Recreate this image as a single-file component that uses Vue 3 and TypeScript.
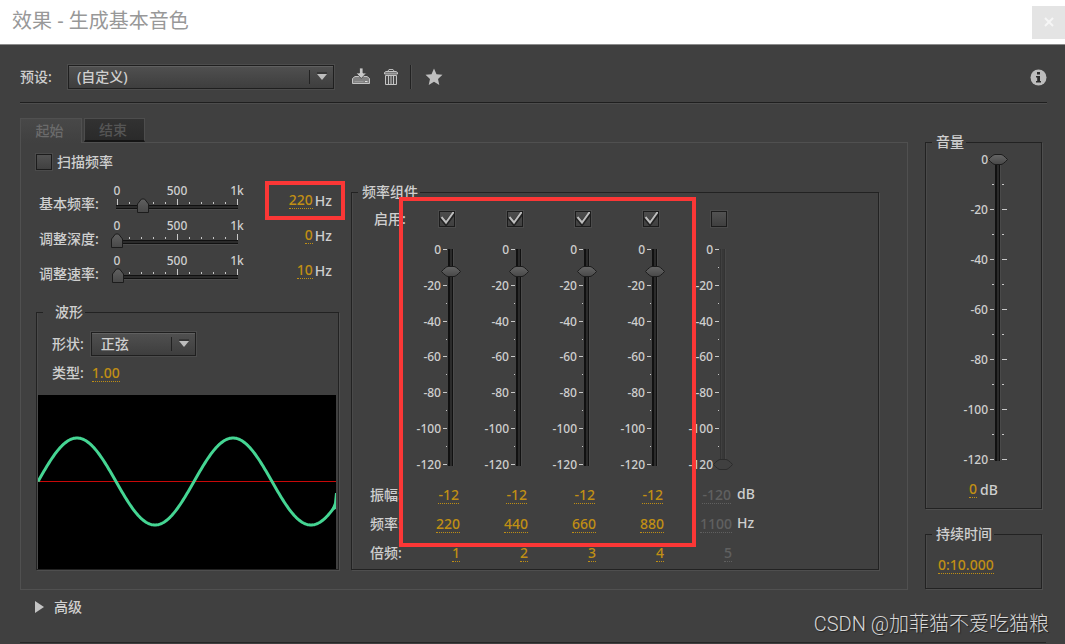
<script setup lang="ts">
import { ref } from 'vue'

interface Sweep { id: string; label: string; value: number; marked: boolean }
interface Partial { on: boolean; amp: number; freq: number; multiple: number }

const sweeps = ref<Sweep[]>([
  { id: 'base', label: '基本频率:', value: 220, marked: true },
  { id: 'depth', label: '调整深度:', value: 0, marked: false },
  { id: 'rate', label: '调整速率:', value: 10, marked: false },
])

const partials = ref<Partial[]>([
  { on: true, amp: -12, freq: 220, multiple: 1 },
  { on: true, amp: -12, freq: 440, multiple: 2 },
  { on: true, amp: -12, freq: 660, multiple: 3 },
  { on: true, amp: -12, freq: 880, multiple: 4 },
  { on: false, amp: -120, freq: 1100, multiple: 5 },
])

const volume = ref(0)
const sweepOn = ref(false)
const levels = [0, -20, -40, -60, -80, -100, -120]
const steps = Array.from({ length: 11 }, (_, i) => i)
const halves = Array.from({ length: 13 }, (_, i) => i)

const wave = (() => {
  const points: string[] = []
  for (let x = 0; x <= 297; x += 1) {
    const y = 86.5 - 43.5 * Math.sin((x / 156) * Math.PI * 2)
    points.push(`${x},${y.toFixed(2)}`)
  }
  return points.join(' ')
})()
</script>

<template>
  <div class="dialog">
    <header class="titlebar">
      <h1>效果 - 生成基本音色</h1>
      <button type="button" class="close" aria-label="关闭">
        <svg width="10" height="10" viewBox="0 0 10 10"><path d="M1 1l8 8M9 1l-8 8" stroke="#f6f6f6" stroke-width="2" /></svg>
      </button>
    </header>

    <div class="toolbar">
      <label class="preset-label" for="preset">预设:</label>
      <span class="drop preset">
        <select id="preset"><option>(自定义)</option></select>
        <svg class="arrow" width="20" height="16" viewBox="0 0 20 16"><path d="M.5 1v14" stroke="#222" /><path d="M8 4h10" stroke="#222" /><path d="M8 5h10l-5 6z" fill="#bdbdbd" /></svg>
      </span>
      <button type="button" class="tool save" aria-label="保存预设">
        <svg width="20" height="18" viewBox="0 0 20 18">
          <path d="M4 8.500h12l2.500 2v5h-17v-5z" fill="#808080" stroke="#c4c4c4" stroke-linejoin="round" />
          <path d="M3.500 13.500h9" stroke="#999" /><path d="M14 13.500h2.500" stroke="#ddd" />
          <path d="M8.500 0h3.500v5H15.500l-5.200 5.500L5 5h3.500z" fill="#c8c8c8" stroke="#404040" stroke-width=".8" />
        </svg>
      </button>
      <button type="button" class="tool trash" aria-label="删除预设">
        <svg width="16" height="18" viewBox="0 0 16 18">
          <path d="M5 3l1-1.500h4L11 3" fill="none" stroke="#bbb" />
          <path d="M1.500 6V4.500L3 3.500h10l1.500 1V6z" fill="#777" stroke="#c4c4c4" />
          <path d="M2.500 7.500h11v9h-11z" fill="#4a4a4a" stroke="#c4c4c4" />
          <path d="M5.500 8v8M8 8v8M10.500 8v8" stroke="#c4c4c4" />
        </svg>
      </button>
      <span class="bar"></span>
      <button type="button" class="tool" aria-label="收藏">
        <svg width="18" height="18" viewBox="0 0 18 18"><path d="M9 .5l2.500 5.700 6 .6-4.500 4.100 1.300 6.100L9 13.800 3.700 17 5 10.900.5 6.800l6-.6z" fill="#c0c0c0" /></svg>
      </button>
      <button type="button" class="tool info" aria-label="信息">
        <svg width="17" height="17" viewBox="0 0 17 17">
          <circle cx="8.500" cy="8.500" r="8" fill="#bdbdbd" />
          <path d="M7 3h3v2.500H7zM6 7h4v5h1v1.500H6V12h1.200V8.500H6z" fill="#2c2c2c" />
        </svg>
      </button>
    </div>

    <main class="main">
      <div class="left">
        <div class="tabs" role="tablist">
          <button type="button" role="tab" aria-selected="true" class="tab active">起始</button>
          <button type="button" role="tab" aria-selected="false" class="tab">结束</button>
        </div>

        <section class="panel">
          <div class="source">
            <label class="sweep"><input v-model="sweepOn" type="checkbox" class="check" />扫描频率</label>

            <div v-for="s in sweeps" :key="s.id" class="row">
              <label class="row-label" :for="s.id">{{ s.label }}</label>
              <div class="hscale">
                <div class="hnums"><span>0</span><span>500</span><span>1k</span></div>
                <div class="hbody">
                  <svg width="132" height="16" viewBox="0 0 132 16">
                    <path
                      v-for="i in steps"
                      :key="i"
                      :d="`M${i * 12 + 6.5} ${i % 5 === 0 ? 1 : 4}V${i % 5 === 0 ? 7 : 6}`"
                      stroke="#c8c8c8"
                    />
                  </svg>
                  <input :id="s.id" v-model.number="s.value" type="range" class="hrange" min="0" max="1000" />
                </div>
              </div>
              <div class="reading">
                <button type="button" class="hot">{{ s.value }}</button><span>Hz</span>
                <i v-if="s.marked" class="mark"></i>
              </div>
            </div>

            <fieldset class="group wave">
              <legend>波形</legend>
              <div class="wave-row">
                <label for="shape">形状:</label>
                <span class="drop shape">
                  <select id="shape"><option>正弦</option></select>
                  <svg class="arrow" width="20" height="16" viewBox="0 0 20 16"><path d="M.5 1v14" stroke="#222" /><path d="M8 4h10" stroke="#222" /><path d="M8 5h10l-5 6z" fill="#bdbdbd" /></svg>
                </span>
              </div>
              <div class="wave-row type">
                <span>类型:</span><button type="button" class="hot">1.00</button>
              </div>
              <svg class="plot" viewBox="0 0 298 174" preserveAspectRatio="none">
                <rect x="0" y="86" width="298" height="1" fill="#c80808" />
                <polyline :points="wave" fill="none" stroke="#45d593" stroke-width="3" stroke-linejoin="round" />
                <path d="M293 116l3-8 1-10h1v16z" fill="#45d593" />
              </svg>
            </fieldset>
          </div>

          <fieldset class="group freq">
            <legend>频率组件</legend>
            <div class="mixer">
              <span class="name enable">启用:</span>
              <span v-for="p in partials" :key="'c' + p.multiple" class="cell tick-cell">
                <input v-model="p.on" type="checkbox" class="check" :aria-label="'启用 ' + p.multiple" />
              </span>
              <span class="unit"></span>

              <span class="name"></span>
              <div v-for="p in partials" :key="'f' + p.multiple" class="fader">
                <div class="nums"><span v-for="l in levels" :key="l">{{ l }}</span></div>
                <svg width="4" height="227" viewBox="0 0 4 227">
                  <path
                    v-for="i in halves"
                    :key="i"
                    :d="`M${i % 2 ? 3 : 0} ${Math.round(i * 17.9) + 5.5}H4`"
                    stroke="#c8c8c8"
                  />
                </svg>
                <input
                  v-model.number="p.amp" type="range" class="vrange" min="-120" max="0"
                  :disabled="!p.on" :aria-label="'振幅 ' + p.multiple"
                />
              </div>
              <span class="unit"></span>

              <span class="name">振幅:</span>
              <span v-for="p in partials" :key="'a' + p.multiple" class="cell">
                <button type="button" class="hot amp" :disabled="!p.on">{{ p.amp }}</button>
              </span>
              <span class="unit">dB</span>

              <span class="name">频率:</span>
              <span v-for="p in partials" :key="'h' + p.multiple" class="cell">
                <button type="button" class="hot" :disabled="!p.on">{{ p.freq }}</button>
              </span>
              <span class="unit">Hz</span>

              <span class="name">倍频:</span>
              <span v-for="p in partials" :key="'m' + p.multiple" class="cell">
                <button type="button" class="hot" :disabled="!p.on">{{ p.multiple }}</button>
              </span>
              <span class="unit"></span>
              <i class="mark"></i>
            </div>
          </fieldset>
        </section>
      </div>

      <aside class="right">
        <fieldset class="group volume">
          <legend>音量</legend>
          <div class="fader master">
            <div class="nums"><span v-for="l in levels" :key="l">{{ l }}</span></div>
            <svg width="18" height="312" viewBox="0 0 18 312">
              <path
                v-for="i in halves"
                :key="i"
                :d="i % 2 ? `M2 ${i * 25 + 5.5}h2M12 ${i * 25 + 5.5}h2` : `M0 ${i * 25 + 5.5}h4M12 ${i * 25 + 5.5}h5`"
                stroke="#c8c8c8"
              />
            </svg>
            <input v-model.number="volume" type="range" class="vrange" min="-120" max="0" aria-label="音量" />
          </div>
          <div class="vol-value"><button type="button" class="hot">{{ volume }}</button><span>dB</span></div>
        </fieldset>
        <fieldset class="group duration">
          <legend>持续时间</legend>
          <button type="button" class="hot">0:10.000</button>
        </fieldset>
      </aside>
    </main>

    <footer class="footer">
      <button type="button" class="advanced" aria-expanded="false">
        <svg width="9" height="12" viewBox="0 0 9 12"><path d="M0 0l9 6-9 6z" fill="#c4c4c4" /></svg>高级
      </button>
    </footer>
    <div class="watermark">CSDN @加菲猫不爱吃猫粮</div>
  </div>
</template>

<style>
body {
  background: #404040;
}
</style>

<style scoped>
.dialog,
.dialog * {
  box-sizing: border-box;
}
.dialog {
  position: relative;
  min-height: 100vh;
  display: flex;
  flex-direction: column;
  background: #404040;
  color: #cfcfcf;
  font: 500 14px/18px "Noto Sans", "Noto Sans CJK SC", sans-serif;
  white-space: nowrap;
}
button {
  font: inherit;
  color: inherit;
  background: none;
  border: 0;
  padding: 0;
}
svg {
  display: block;
  flex: none;
}
.titlebar {
  display: flex;
  align-items: center;
  justify-content: space-between;
  height: 45px;
  padding: 0 0 0 12px;
  background: #fff;
  border-bottom: 1px solid #8c8c8c;
}
h1 {
  margin: 0 0 3px;
  font-size: 20px;
  font-weight: 400;
  line-height: 28px;
  color: #989898;
}
.close {
  display: grid;
  place-items: center;
  width: 33px;
  height: 33px;
  background: #e4e4e4;
}
.toolbar {
  display: flex;
  align-items: center;
  height: 58px;
  margin: 0 18px 0 20px;
  padding-bottom: 9px;
  padding-top: 16px;
  border-bottom: 1px solid #1f1f1f;
  box-shadow: 0 1px 0 #4d4d4d;
}
.preset-label {
  width: 48px;
}
.drop {
  position: relative;
  display: flex;
  height: 24px;
}
.drop select {
  appearance: none;
  width: 100%;
  height: 24px;
  padding: 0 24px 0 8px;
  border: 1px solid #1f1f1f;
  border-radius: 0;
  outline: 1px solid #4c4c4c;
  background: linear-gradient(#505050, #3e3e3e);
  box-shadow: inset 0 1px 0 #606060;
  color: #d0d0d0;
  font: inherit;
}
.arrow {
  position: absolute;
  right: 5px;
  top: 4px;
  pointer-events: none;
}
.preset {
  width: 266px;
}
.tool {
  display: block;
}
.save {
  margin: 0 12px 0 17px;
}
.bar {
  width: 2px;
  height: 24px;
  margin: 0 13px 0 11px;
  background: linear-gradient(90deg, #222 50%, #4d4d4d 50%);
}
.info {
  margin-left: auto;
}
.main {
  display: flex;
  gap: 17px;
  margin: 15px 23px 0 20px;
}
.left {
  flex: 1;
}
.tabs {
  display: flex;
  gap: 2px;
  height: 24px;
}
.tab {
  width: 61px;
  height: 24px;
  padding-right: 3px;
  color: #555;
  background: linear-gradient(#323232, #2a2a2a);
  border: 1px solid #4d4d4d;
  border-bottom: 2px solid #151515;
}
.tab.active {
  position: relative;
  width: 62px;
  height: 25px;
  color: #6b6b6b;
  background: linear-gradient(#484848, #404040);
  border: 1px solid #505050;
  border-bottom: 0;
}
.panel {
  display: grid;
  grid-template-columns: 303px 1fr;
  gap: 12px;
  padding: 11px 28px 19px 15px;
  border: 1px solid #505050;
}
.sweep {
  display: flex;
  align-items: center;
  gap: 5px;
  height: 16px;
  margin-bottom: 13px;
}
.check {
  appearance: none;
  flex: none;
  width: 16px;
  height: 16px;
  margin: 0;
  border: 1px solid #1c1c1c;
  outline: 1px solid #4b4b4b;
  background: linear-gradient(#525252, #404040);
}
.check:checked {
  background:
    url("data:image/svg+xml,%3Csvg xmlns='http://www.w3.org/2000/svg' width='16' height='16'%3E%3Cpath d='M2 6.500l5 6L15.500 1.500' fill='none' stroke='%23222' stroke-width='4'/%3E%3Cpath d='M2.500 6l4.500 5.500L15 .5' fill='none' stroke='%23bdbdbd' stroke-width='2'/%3E%3C/svg%3E") no-repeat border-box,
    linear-gradient(#4c4c4c, #404040);
}
.row {
  display: flex;
  height: 35px;
  padding-left: 3px;
}
.row > * {
  flex: none;
}
.row-label {
  width: 66px;
  padding-top: 12px;
}
.hscale {
  width: 144px;
  margin-right: 16px;
}
.hnums {
  display: flex;
  justify-content: space-between;
  height: 15px;
  font-size: 12px;
  line-height: 16px;
}
.hnums span {
  width: 24px;
  text-align: center;
}
.hbody {
  display: grid;
  margin: 0 6px;
}
.hbody > * {
  grid-area: 1 / 1;
}
.hrange {
  appearance: none;
  width: 132px;
  height: 16px;
  margin: 0;
  background: none;
}
.hrange::-webkit-slider-runnable-track {
  height: 16px;
  background:
    linear-gradient(#111 1px, #2b2b2b 1px 3px, #111 3px 4px, #4c4c4c 4px) center 7px / 122px 5px no-repeat;
}
.hrange::-webkit-slider-thumb {
  appearance: none;
  width: 12px;
  height: 16px;
  background: url("data:image/svg+xml,%3Csvg xmlns='http://www.w3.org/2000/svg' width='12' height='16'%3E%3ClinearGradient id='g' x2='0' y2='1'%3E%3Cstop stop-color='%23606060'/%3E%3Cstop offset='1' stop-color='%23484848'/%3E%3C/linearGradient%3E%3Cpath d='M.5 14.500V6L4.500 1h3l4 5v8.500z' fill='url(%23g)' stroke='%231c1c1c'/%3E%3C/svg%3E") no-repeat;
}
.reading {
  position: relative;
  display: flex;
  justify-content: flex-end;
  align-items: center;
  gap: 2px;
  width: 80px;
  height: 35px;
  padding-right: 13px;
}
.reading .mark {
  inset: -2px 0;
}
.mark {
  position: absolute;
  border: 4px solid #fb3736;
  pointer-events: none;
}
.hot {
  flex: none;
  height: 17px;
  line-height: 16px;
  color: #c08f14;
  border-bottom: 1px dotted #c08f14;
}
.hot:disabled {
  color: #606060;
  border-color: #606060;
}
.group {
  min-width: 0;
  margin: 0;
  padding: 0;
  border: 1px solid #222;
  box-shadow: 1px 1px 0 #4e4e4e, inset 1px 0 0 #4a4a4a;
}
legend {
  height: 20px;
  margin-left: 6px;
  padding: 0 2px 0 4px;
  line-height: 20px;
}
.wave {
  margin-top: 14px;
}
.wave legend {
  padding-left: 12px;
}
.wave-row {
  display: flex;
  align-items: center;
  gap: 7px;
  height: 24px;
  margin: 10px 0 0 15px;
}
.wave-row.type {
  margin: 5px 0 10px 15px;
  gap: 8px;
}
.shape {
  width: 105px;
}
.shape select {
  padding-left: 9px;
}
.plot {
  width: calc(100% - 3px);
  height: 174px;
  margin: 0 2px 0 1px;
  background: #000;
}
.freq {
  margin-top: 28px;
}
.mixer {
  position: relative;
  display: grid;
  grid-template-columns: 42px repeat(5, 68px) 1fr;
  grid-template-rows: 42px 236px repeat(3, 29px);
}
.mixer > .mark {
  left: 47px;
  top: -5px;
  width: 297px;
  height: 350px;
}
.name {
  padding: 6px 0 0 18px;
}
.name.enable {
  padding: 8px 0 0 22px;
}
.cell {
  padding: 7px 2px 0 0;
  text-align: right;
  line-height: 16px;
}
.cell.tick-cell {
  padding: 9px 7px 0 0;
}
.amp {
  margin-right: 1px;
}
.unit {
  padding: 5px 0 0 3px;
}
.fader {
  display: flex;
  height: 227px;
  width: 68px;
}
.nums {
  display: flex;
  flex-direction: column;
  justify-content: space-between;
  width: 47px;
  margin-right: 2px;
  font-size: 12px;
  line-height: 12px;
  text-align: right;
}
.vrange {
  appearance: none;
  writing-mode: vertical-lr;
  direction: rtl;
  width: 20px;
  height: 227px;
  margin: 0 0 0 -6px;
  background: none;
}
.vrange::-webkit-slider-runnable-track {
  width: 20px;
  background:
    linear-gradient(90deg, #111 2px, #2b2b2b 2px 4px, #111 4px 5px, #4a4a4a 5px) 7px center / 6px calc(100% - 10px) no-repeat;
}
.vrange::-webkit-slider-thumb {
  appearance: none;
  width: 20px;
  height: 12px;
  background: url("data:image/svg+xml,%3Csvg xmlns='http://www.w3.org/2000/svg' width='20' height='12'%3E%3ClinearGradient id='g' x2='0' y2='1'%3E%3Cstop stop-color='%23666'/%3E%3Cstop offset='1' stop-color='%23484848'/%3E%3C/linearGradient%3E%3Cpath d='M.5 5.500Q5 .5 7 .5h6Q15 .5 19.500 5.500 15 10.500 13 10.500H7Q5 10.500.5 5.500z' fill='url(%23g)' stroke='%231c1c1c'/%3E%3C/svg%3E") no-repeat;
}
.vrange:disabled::-webkit-slider-runnable-track {
  background:
    linear-gradient(90deg, #333 1px, #404040 1px 2px, #383838 2px 4px, #333 4px 5px, #484848 5px) 7px center / 6px calc(100% - 10px) no-repeat;
}
.vrange:disabled::-webkit-slider-thumb {
  background: url("data:image/svg+xml,%3Csvg xmlns='http://www.w3.org/2000/svg' width='20' height='12'%3E%3Cpath d='M.5 5.500Q5 .5 7 .5h6Q15 .5 19.500 5.500 15 10.500 13 10.500H7Q5 10.500.5 5.500z' fill='%23404040' stroke='%232c2c2c'/%3E%3C/svg%3E") no-repeat;
}
.right {
  display: flex;
  flex-direction: column;
  gap: 15px;
  width: 117px;
  margin-top: 14px;
}
.volume {
  height: 377px;
}
.master {
  width: auto;
  height: 312px;
  margin-top: 2px;
}
.master .nums {
  width: 62px;
}
.master .vrange {
  height: 312px;
  margin-left: -20px;
}
.vol-value {
  display: flex;
  justify-content: center;
  gap: 3px;
  margin-top: 15px;
}
.duration {
  height: 65px;
}
.duration .hot {
  margin: 13px 0 0 12px;
}
.footer {
  flex: 1;
  margin: 0 19px 1px 20px;
  padding: 8px 0 24px 15px;
  border-bottom: 1px solid #262626;
}
.advanced {
  display: flex;
  align-items: center;
  gap: 10px;
}
.watermark {
  position: absolute;
  right: 16px;
  bottom: 6px;
  font-size: 20px;
  font-weight: 300;
  line-height: 28px;
  color: #d8d8d8;
  font-family: Roboto, "Noto Sans CJK SC", sans-serif;
  text-shadow: 1px 1px 1px #222;
}
</style>
